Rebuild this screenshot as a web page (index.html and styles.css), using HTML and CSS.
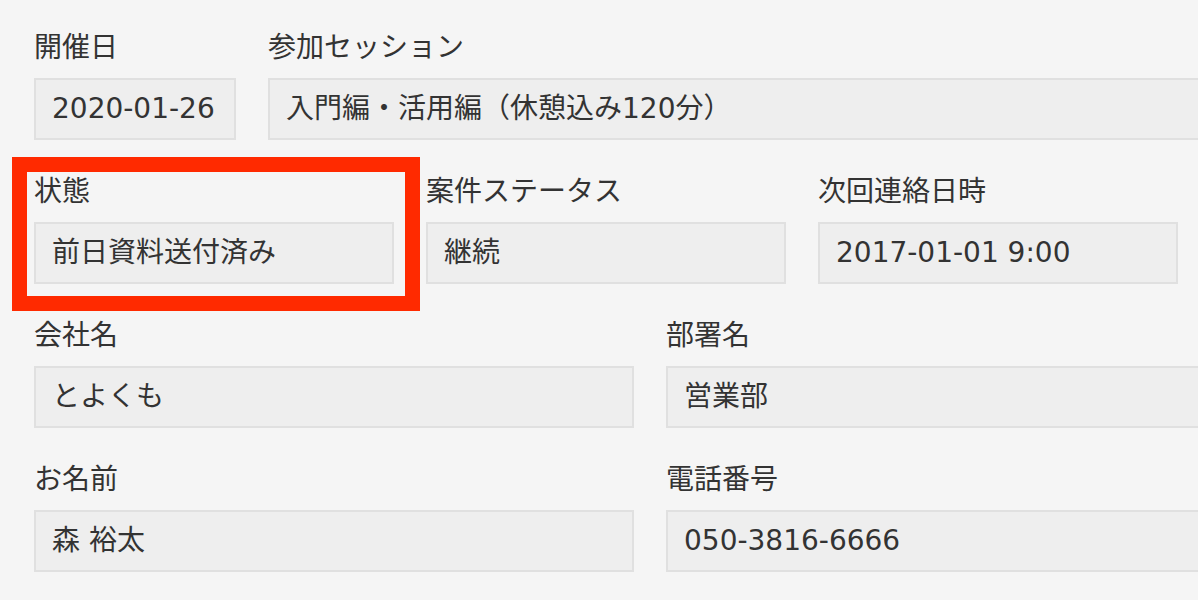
FILE: index.html
```html
<!DOCTYPE html>
<html lang="ja">
<head>
  <meta charset="UTF-8">
  <title>レコード詳細</title>
  <link rel="stylesheet" href="styles.css">
</head>
<body>
  <div id="record">
    <div class="row">
      <div class="field">
        <div class="label">開催日</div>
        <div class="value w-date">2020-01-26</div>
      </div>
      <div class="field grow">
        <div class="label">参加セッション</div>
        <div class="value cut">入門編・活用編（休憩込み120分）</div>
      </div>
    </div>

    <div class="row">
      <div class="field marked">
        <div class="label">状態</div>
        <div class="value w-mid">前日資料送付済み</div>
      </div>
      <div class="field">
        <div class="label">案件ステータス</div>
        <div class="value w-mid">継続</div>
      </div>
      <div class="field">
        <div class="label">次回連絡日時</div>
        <div class="value w-mid">2017-01-01 9:00</div>
      </div>
    </div>

    <div class="row">
      <div class="field">
        <div class="label">会社名</div>
        <div class="value w-half">とよくも</div>
      </div>
      <div class="field grow">
        <div class="label">部署名</div>
        <div class="value cut">営業部</div>
      </div>
    </div>

    <div class="row">
      <div class="field">
        <div class="label">お名前</div>
        <div class="value w-half">森 裕太</div>
      </div>
      <div class="field grow">
        <div class="label">電話番号</div>
        <div class="value cut">050-3816-6666</div>
      </div>
    </div>
  </div>
</body>
</html>
```

FILE: styles.css
```css
* { margin: 0; padding: 0; box-sizing: border-box; }
body {
  background-color: #f5f5f5;
  color: #333;
  font-family: "DejaVu Sans", "Noto Sans CJK JP", sans-serif;
  font-size: 28px;
  overflow: hidden;
}
#record {
  padding: 30px 0 0 34px;
}
.row {
  display: flex;
  gap: 32px;
  margin-bottom: 34px;
}
.field {
  position: relative;
  flex: none;
}
.field.grow {
  flex: 1;
  min-width: 0;
}
.label {
  height: 36px;
  line-height: 36px;
  margin-bottom: 12px;
  white-space: nowrap;
}
.value {
  height: 62px;
  line-height: 58px;
  padding: 0 16px;
  background: #eeeeee;
  border: 2px solid #e0e0e0;
  white-space: nowrap;
  overflow: hidden;
}
/* 画面右端で切れている欄 */
.value.cut { border-right-width: 0; }
.w-date { width: 202px; }
.w-mid { width: 360px; }
.w-half { width: 600px; }

/* 赤枠の強調 */
.marked::after {
  content: "";
  box-sizing: border-box;
  position: absolute;
  left: -22px;
  top: -17px;
  width: 408px;
  height: 154px;
  border: 15px solid #ff2a00;
}
```
